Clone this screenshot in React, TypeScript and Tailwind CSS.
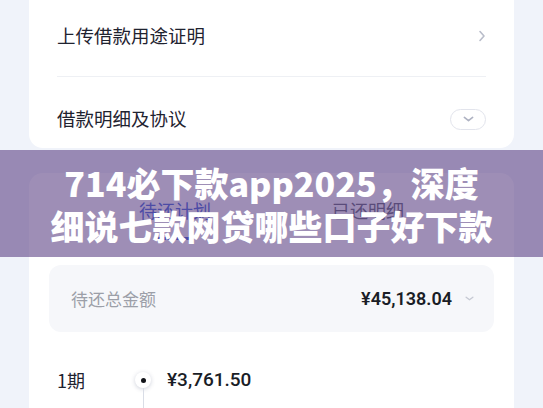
import React from 'react';

const cjk = { fontFamily: '"Noto Sans CJK SC", "Noto Sans", sans-serif' };
const num = { fontFamily: 'Roboto, "Noto Sans CJK SC", sans-serif' };

function ChevronRight() {
  return (
    <svg width="8" height="12" viewBox="0 0 8 12" fill="none">
      <path d="M2 1.5L6 6L2 10.5" stroke="#b9bdca" strokeWidth="1.6" strokeLinecap="round" strokeLinejoin="round" />
    </svg>
  );
}

function ChevronDown({ color = '#b4b8c6', w = 12 }: { color?: string; w?: number }) {
  return (
    <svg width={w} height={w * 0.6} viewBox="0 0 12 7" fill="none">
      <path d="M1.5 1.5L6 5L10.5 1.5" stroke={color} strokeWidth="1.8" strokeLinecap="round" strokeLinejoin="round" />
    </svg>
  );
}

export default function App() {
  return (
    <div className="relative w-full h-[408px] overflow-hidden bg-[#f0f3fa] px-[29px]" style={cjk}>
      {/* top card: upload + agreement rows */}
      <div className="bg-white rounded-b-[14px] px-[28px]">
        <div className="h-[76px] pb-[4px] flex items-center justify-between">
          <span className="text-[18.5px] text-[#1f2330]">上传借款用途证明</span>
          <ChevronRight />
        </div>
        <div className="h-px bg-[#eef0f4]" />
        <div className="pt-[27px] pb-[14px]">
          <div className="h-[30px] flex items-center justify-between">
            <span className="text-[18.5px] text-[#1f2330]">借款明细及协议</span>
            <div className="w-[36px] h-[21px] rounded-full border border-[#e2e4ec] flex items-center justify-center">
              <ChevronDown color="#aeb2c2" w={11} />
            </div>
          </div>
        </div>
      </div>

      {/* repayment card */}
      <div className="mt-[25px] bg-white rounded-t-[14px] px-[20px] pb-[40px]">
        <div className="pt-[25px] flex justify-center">
          <div className="w-[193px] flex flex-col items-center">
            <span className="text-[18px] leading-[24px] text-[#3457d5]">待还计划</span>
            <div className="mt-[15px] w-[38px] h-[3px] rounded-full bg-[#3457d5]" />
          </div>
          <div className="w-[193px] flex flex-col items-center">
            <span className="text-[18px] leading-[24px] text-[#55596a]">已还明细</span>
          </div>
        </div>

        <div className="mt-[25px] h-[67px] rounded-[12px] bg-[#f6f7fa] pl-[22px] pr-[20px] flex items-center justify-between">
          <span className="text-[17px] text-[#9c9fa8]">待还总金额</span>
          <div className="flex items-center gap-[13px]">
            <span className="text-[18px] font-semibold text-[#1a1d26]" style={num}>¥45,138.04</span>
            <ChevronDown color="#c6c9d3" w={9} />
          </div>
        </div>

        <div className="mt-[36px] ml-[8px] flex">
          <div className="w-[76px] flex flex-col">
            <span className="h-[24px] leading-[24px] text-[18px] text-[#1f2330]">1期</span>
            <span className="mt-[15px] text-[14px] text-[#a3a6b0]" style={num}>2025/08/05</span>
          </div>
          <div className="w-[20px] flex flex-col items-center">
            <div className="mt-[4px] w-[16px] h-[16px] rounded-full bg-white shadow-[0_1px_4px_rgba(60,70,110,0.25)] flex items-center justify-center">
              <div className="w-[5px] h-[5px] rounded-full bg-[#111318]" />
            </div>
            <div className="w-px h-[40px] bg-[#d9dde6]" />
          </div>
          <div className="ml-[14px] flex flex-col">
            <span className="h-[24px] leading-[24px] text-[19px] font-medium text-[#1a1d26]" style={num}>¥3,761.50</span>
            <span className="mt-[15px] text-[14px] text-[#a3a6b0]">本金 ¥3,600.00　利息 ¥161.50</span>
          </div>
        </div>
      </div>

      {/* title banner over the page */}
      <div className="absolute left-0 right-0 top-[150px] h-[107px] bg-[#5d4385]/60 flex flex-col items-center justify-center">
        <div className="text-white font-black text-[34px] leading-[43px] whitespace-nowrap">714必下款app2025，深度</div>
        <div className="text-white font-black text-[34px] leading-[43px] whitespace-nowrap">细说七款网贷哪些口子好下款</div>
      </div>
    </div>
  );
}
